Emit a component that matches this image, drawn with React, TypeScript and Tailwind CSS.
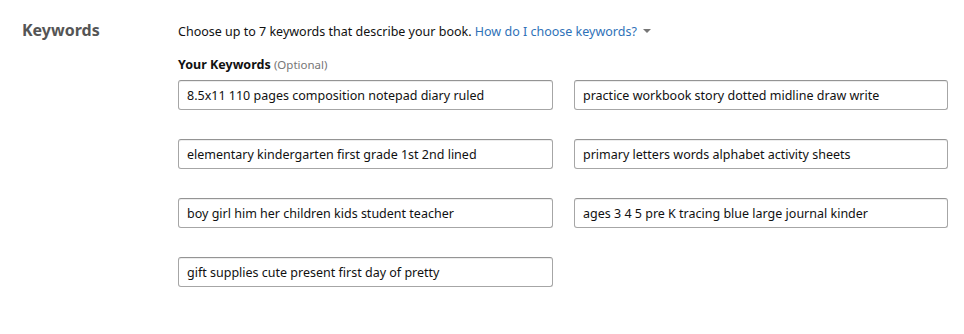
import { useState } from "react";

const initialKeywords = [
  "8.5x11 110 pages composition notepad diary ruled",
  "practice workbook story dotted midline draw write",
  "elementary kindergarten first grade 1st 2nd lined",
  "primary letters words alphabet activity sheets",
  "boy girl him her children kids student teacher",
  "ages 3 4 5 pre K tracing blue large journal kinder",
  "gift supplies cute present first day of pretty",
];

export default function App() {
  const [keywords, setKeywords] = useState(initialKeywords);

  return (
    <div className="w-[964px] h-[334px] bg-white font-['Noto_Sans',sans-serif] text-[#111] flex">
      <div className="w-[178px] pl-[22px] pt-[19px]">
        <h2 className="text-[16px] font-bold text-[#555] leading-[22px]">Keywords</h2>
      </div>

      <div className="pt-[22px]">
        <p className="text-[12.5px] leading-[19px] text-[#111]">
          Choose up to 7 keywords that describe your book.{" "}
          <a className="text-[#2f72b8] cursor-pointer">
            How do I choose keywords?
            <span className="inline-block ml-[6px] align-middle mb-[3px] w-0 h-0 border-l-[4px] border-r-[4px] border-t-[4px] border-l-transparent border-r-transparent border-t-[#767676]"></span>
          </a>
        </p>

        <p className="mt-[15px] text-[12.5px] leading-[18px] font-bold text-[#111]">
          Your Keywords <span className="font-normal text-[11.5px] text-[#767676]">(Optional)</span>
        </p>

        <div className="mt-[6px] grid grid-cols-[375px_374px] gap-x-[21px] gap-y-[29px]">
          {keywords.map((k, i) => (
            <input
              key={i}
              type="text"
              value={k}
              onChange={(e) => {
                const next = [...keywords];
                next[i] = e.target.value;
                setKeywords(next);
              }}
              className="h-[30px] px-[8px] text-[12.5px] text-[#111] bg-white border border-[#a6a6a6] border-t-[#949494] rounded-[3px] shadow-[inset_0_1px_0_rgba(0,0,0,0.07)] focus:outline-none"
            />
          ))}
        </div>
      </div>
    </div>
  );
}
